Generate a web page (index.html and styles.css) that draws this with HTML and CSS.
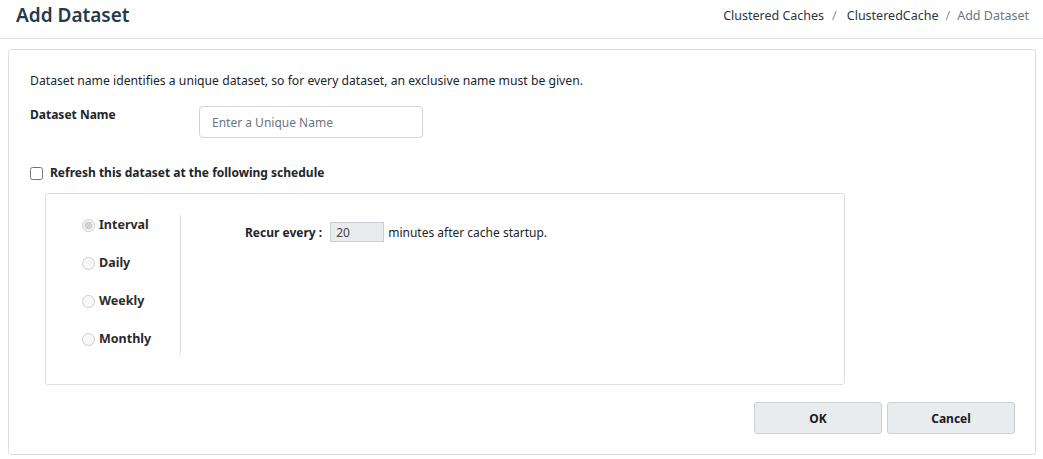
FILE: index.html
```
<!DOCTYPE html>
<html lang="en">
<head>
  <meta charset="UTF-8">
  <title>Add Dataset</title>
  <link rel="stylesheet" href="styles.css">
</head>
<body>
  <div class="page-header">
    <h1>Add Dataset</h1>
    <div class="breadcrumb">
      <span>Clustered Caches</span>
      <span class="sep first">/</span>
      <span>ClusteredCache</span>
      <span class="sep">/</span>
      <span class="current">Add Dataset</span>
    </div>
  </div>

  <div class="card">
    <p class="hint">Dataset name identifies a unique dataset, so for every dataset, an exclusive name must be given.</p>

    <div class="field-row">
      <label class="field-label">Dataset Name</label>
      <input class="text-input" type="text" placeholder="Enter a Unique Name">
    </div>

    <label class="check-row">
      <input type="checkbox">
      <span>Refresh this dataset at the following schedule</span>
    </label>

    <div class="schedule">
      <div class="schedule-types">
        <label class="radio-row"><input type="radio" name="kind" checked disabled><span>Interval</span></label>
        <label class="radio-row"><input type="radio" name="kind" disabled><span>Daily</span></label>
        <label class="radio-row"><input type="radio" name="kind" disabled><span>Weekly</span></label>
        <label class="radio-row"><input type="radio" name="kind" disabled><span>Monthly</span></label>
      </div>
      <div class="schedule-detail">
        <span class="recur-label">Recur every :</span>
        <input class="small-input" type="text" value="20" disabled>
        <span>minutes after cache startup.</span>
      </div>
    </div>

    <div class="actions">
      <button class="btn">OK</button>
      <button class="btn">Cancel</button>
    </div>
  </div>
</body>
</html>
```

FILE: styles.css
```
/* Base */
body {
  margin: 0;
  font-family: 'Noto Sans', 'Open Sans', sans-serif;
  font-size: 12px;
  color: #212529;
  background: #fff;
}

/* Header */
.page-header {
  display: flex;
  justify-content: space-between;
  align-items: center;
  height: 30px;
  padding: 0 14px 8px 16px;
  border-bottom: 1px solid #dde2e8;
  margin-bottom: 10px;
}

.page-header h1 {
  margin: 0;
  font-size: 19px;
  font-weight: 600;
  color: #263a4f;
}

.breadcrumb {
  display: flex;
  gap: 6px;
  font-size: 12.5px;
  color: #2b3640;
}

.breadcrumb .sep {
  color: #8a949c;
  margin: 0 1px;
}

.breadcrumb .sep.first {
  margin: 0 4px 0 2px;
}

.breadcrumb .current {
  color: #6c757d;
}

/* Card */
.card {
  margin: 0 7px 0 8px;
  border: 1px solid #dcdfe3;
  border-radius: 3px;
  padding: 22px 20px 0 21px;
  height: 382px;
}

.hint {
  margin: 0 0 16px 0;
  font-size: 12.2px;
  line-height: 18px;
}

.field-row {
  display: flex;
  align-items: flex-start;
}

.field-label {
  width: 169px;
  font-weight: 700;
  padding-top: 1px;
  line-height: 16px;
}

.text-input {
  width: 224px;
  height: 32px;
  box-sizing: border-box;
  border: 1px solid #ced4da;
  border-radius: 4px;
  padding: 0 12px;
  font-family: inherit;
  font-size: 12px;
  margin: 0;
}

.text-input::placeholder {
  color: #6c757d;
}

.check-row {
  display: flex;
  align-items: center;
  margin-top: 26px;
  font-weight: 700;
  line-height: 18px;
}

.check-row input {
  margin: 0 7px 0 0;
  width: 13px;
  height: 13px;
}

/* Schedule panel */
.schedule {
  display: flex;
  margin: 11px 170px 0 15px;
  border: 1px solid #dcdfe3;
  border-radius: 3px;
  height: 192px;
  box-sizing: border-box;
  padding: 20px 0 0 36px;
}

.schedule-types {
  display: flex;
  flex-direction: column;
  gap: 20px;
  width: 99px;
  height: 142px;
  padding-top: 2px;
  box-sizing: border-box;
  border-right: 1px solid #dcdfe3;
  border-radius: 0 3px 3px 0;
}

.radio-row {
  display: flex;
  align-items: center;
  font-size: 12.5px;
  font-weight: 700;
  color: #2b2b2b;
  line-height: 18px;
}

.radio-row input {
  margin: 0 4px 0 0;
  width: 13px;
  height: 13px;
}

.schedule-detail {
  display: flex;
  align-items: center;
  align-self: flex-start;
  margin: 8px 0 0 64px;
}

.recur-label {
  font-weight: 700;
  margin-right: 8px;
}

.small-input {
  width: 54px;
  height: 20px;
  box-sizing: border-box;
  border: 1px solid #c9ced4;
  background: #e9ecef;
  padding: 0 5px;
  font-family: inherit;
  font-size: 12px;
  color: #444;
  margin: 0 4px 0 0;
}

/* Buttons */
.actions {
  display: flex;
  justify-content: flex-end;
  gap: 5px;
  margin: 17px 0 0 0;
}

.btn {
  width: 128px;
  height: 32px;
  border: 1px solid #cbd0d5;
  border-radius: 3px;
  background: #e9ecef;
  font-family: inherit;
  font-size: 12px;
  font-weight: 700;
  color: #1a1a1a;
}
```
